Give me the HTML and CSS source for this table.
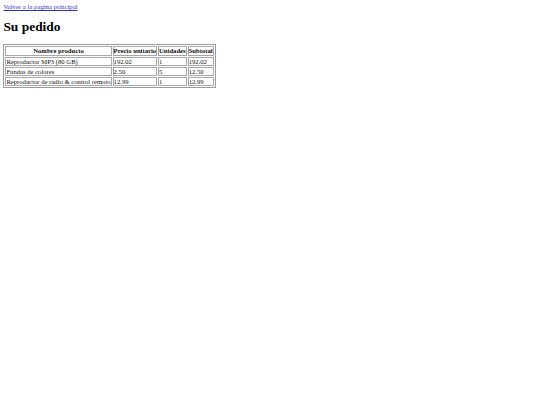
FILE: index.html
```html
<!DOCTYPE html>
<html lang="es">
<head>
<meta charset="utf-8">
<link rel="stylesheet" href="styles.css">
</head>
<body>
<a class="back" href="#">Volver a la pagina principal</a>
<h1 class="title">Su pedido</h1>
<table class="order">
<tr><th>Nombre producto</th><th>Precio unitario</th><th>Unidades</th><th>Subtotal</th></tr>
<tr><td>Reproductor MP3 (80 GB)</td><td>192.02</td><td>1</td><td>192.02</td></tr>
<tr><td>Fundas de colores</td><td>2.50</td><td>5</td><td>12.50</td></tr>
<tr><td>Reproductor de radio &amp; control remoto</td><td>12.99</td><td>1</td><td>12.99</td></tr>
</table>
</body>
</html>
```
FILE: styles.css
```css
body {
  margin: 3.4px;
  font-family: "Liberation Serif", serif;
  font-size: 6.72px;
  background: #fff;
  color: #111;
}
.back {
  color: #3030d0;
}
.title {
  font-size: 13.44px;
  margin: 9px 0;
  color: #000;
}
.order {
  border: 1px solid #9a9a9a;
  border-spacing: 1px;
  font-size: 6.65px;
}
.order th,
.order td {
  border: 1px solid #a8a8a8;
  padding: 0;
  line-height: 7.2px;
}
.order th {
  font-weight: bold;
}
```
